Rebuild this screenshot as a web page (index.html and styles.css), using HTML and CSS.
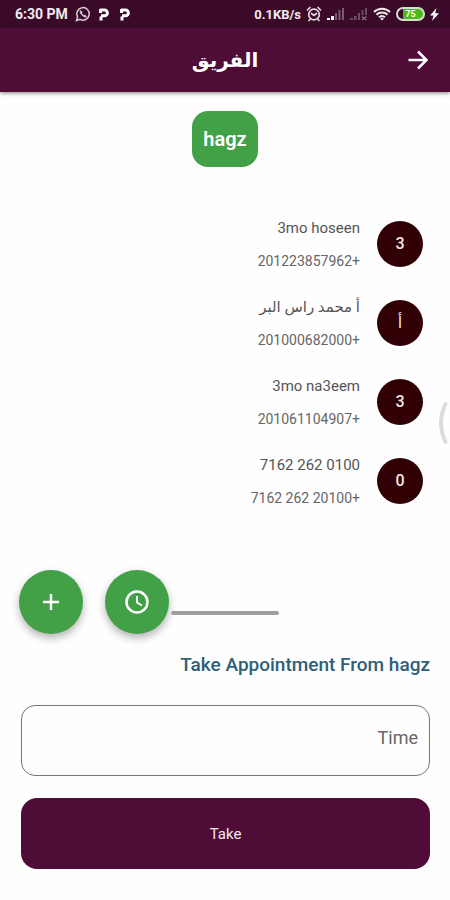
FILE: index.html
```
<!DOCTYPE html>
<html lang="ar" dir="rtl">
<head>
    <meta charset="UTF-8">
    <meta name="viewport" content="width=device-width, initial-scale=1">
    <title>الفريق</title>
    <link rel="stylesheet" href="styles.css">
</head>
<body>
<div class="status-bar" dir="ltr">
    <div class="status-group left">
        <span class="clock">6:30 PM</span>
        <svg width="16" height="16" viewBox="0 0 16 16" fill="none" stroke="#d9ccd4">
            <path d="M1.5 14.5l1-3.6a6.3 6.3 0 1 1 2.5 2.5z" stroke-width="1.5"/>
            <path d="M5.4 4.6c-.8 1 .1 3 1.7 4.6s3.5 2.3 4.4 1.4l-1.7-1.5-1.1.6c-1-.5-1.7-1.3-2.1-2.2l.6-1z" fill="#d9ccd4"/>
        </svg>
        <svg class="app-icon" width="12" height="14" viewBox="0 0 12 14" fill="none" stroke="#fff" stroke-width="3" stroke-linejoin="round">
            <path d="M3 13.5V9.500M2.500 6V3h4a2.800 2.800 0 0 1 0 5.800H3"/>
        </svg>
        <svg class="app-icon" width="12" height="14" viewBox="0 0 12 14" fill="none" stroke="#fff" stroke-width="3" stroke-linejoin="round">
            <path d="M3 13.5V9.500M2.500 6V3h4a2.800 2.800 0 0 1 0 5.800H3"/>
        </svg>
    </div>
    <div class="status-group right">
        <span class="speed">0.1KB/s</span>
        <svg width="16" height="16" viewBox="0 0 16 16" fill="none" stroke="#e3d9df" stroke-width="1.7" stroke-linecap="round">
            <circle cx="8" cy="8.5" r="5.3"/>
            <path d="M1.5 4L4 1.5M14.5 4L12 1.5M5.5 7.5L8 9.500l2.500-2M4 13.500l-1 1M12 13.500l1 1"/>
        </svg>
        <svg width="18" height="14" viewBox="0 0 18 14">
            <path d="M0 13v-2h3v2zM4 13V9h3v4z" fill="#fff"/>
            <path d="M8 13V6h2v7zM11.500 13V3h2v10zM15 13V1h2v12z" fill="#7d5a70"/>
        </svg>
        <svg width="18" height="14" viewBox="0 0 18 14" fill="#6e4a60">
            <path d="M0 13v-2h3v2zM4 13V9h2.500v4zM8 13V6h2v7zM11.500 8V3h2v5zM15 8V1h2v7z"/>
            <path d="M12 9.500l4.500 3.500M16.500 9.500L12 13" stroke="#8b6c80" stroke-width="1.3"/>
        </svg>
        <svg width="18" height="14" viewBox="0 0 18 14" fill="none" stroke="#f1ebef" stroke-width="2">
            <path d="M1 5a11.500 11.500 0 0 1 16 0M3.500 7.800a8 8 0 0 1 11 0M6 10.300a4.500 4.500 0 0 1 6 0"/>
            <path d="M9 13.500l-1.800-1.800a2.500 2.500 0 0 1 3.600 0z" fill="#f1ebef" stroke="none"/>
        </svg>
        <span class="battery">75</span>
        <svg width="9" height="13" viewBox="0 0 9 13" fill="#fff">
            <path d="M6.500 0L0 7.500h3.500L2 13l7-7.800H5.200z"/>
        </svg>
    </div>
</div>

<header class="app-bar">
    <button class="back" aria-label="رجوع">
        <svg width="22" height="22" viewBox="0 0 22 22" fill="none" stroke="#fff" stroke-width="2.5">
            <path d="M1.500 11h17M11 2.500l8.500 8.500-8.500 8.500"/>
        </svg>
    </button>
    <h1>الفريق</h1>
</header>

<main>
    <div class="team">hagz</div>

    <ul class="contacts">
        <li>
            <span class="avatar">3</span>
            <div class="info">
                <p class="name">3mo hoseen</p>
                <p class="phone">+201223857962</p>
            </div>
        </li>
        <li>
            <span class="avatar">أ</span>
            <div class="info">
                <p class="name">أ محمد راس البر</p>
                <p class="phone">+201000682000</p>
            </div>
        </li>
        <li>
            <span class="avatar">3</span>
            <div class="info">
                <p class="name">3mo na3eem</p>
                <p class="phone">+201061104907</p>
            </div>
        </li>
        <li>
            <span class="avatar">0</span>
            <div class="info">
                <p class="name">0100 262 7162</p>
                <p class="phone">+20100 262 7162</p>
            </div>
        </li>
    </ul>

    <div class="actions" dir="ltr">
        <div class="fabs">
            <button class="fab" aria-label="إضافة">
                <svg width="18" height="18" viewBox="0 0 18 18" fill="none" stroke="#fff" stroke-width="2.5">
                    <path d="M9 1v16M1 9h16"/>
                </svg>
            </button>
            <button class="fab" aria-label="الوقت">
                <svg width="24" height="24" viewBox="0 0 24 24" fill="none" stroke="#fff" stroke-width="2.5">
                    <circle cx="12" cy="12" r="10.5"/>
                    <path d="M12 6v6.500l5 3" stroke-width="2"/>
                </svg>
            </button>
        </div>
        <span class="handle"></span>
    </div>

    <form class="appointment">
        <label for="time">Take Appointment From hagz</label>
        <input type="text" id="time" placeholder="Time">
        <button type="button" class="take">Take</button>
    </form>
</main>

<svg class="edge-mark" width="10" height="44" viewBox="0 0 10 44" fill="none" stroke="#dcdcdc" stroke-width="4" stroke-linecap="round">
    <path d="M7.500 3Q-1.500 22 7.500 41"/>
</svg>
</body>
</html>
```
FILE: styles.css
```
* {
    margin: 0;
    padding: 0;
    box-sizing: border-box;
}

body {
    background: #fefefe;
    color: #555;
    font-family: Roboto, "DejaVu Sans", sans-serif;
}

button {
    border: none;
    cursor: pointer;
    font-family: inherit;
}

.status-bar {
    display: flex;
    justify-content: space-between;
    align-items: center;
    height: 28px;
    padding: 0 11px 0 15px;
    background: #3b0a28;
    color: #f1ebef;
}

.status-group {
    display: flex;
    align-items: center;
    gap: 5px;
}

.status-group.left {
    gap: 7px;
}

.app-icon {
    margin-right: 2px;
}

.clock {
    font-size: 14px;
    font-weight: 700;
}

.speed {
    font-size: 13px;
    font-weight: 700;
}

.battery {
    width: 29px;
    height: 14px;
    border: 2px solid #d5e0cd;
    border-radius: 7px;
    background: linear-gradient(to right, #3b0a28 20%, #4db81f 20%);
    color: #fff;
    font-size: 9px;
    font-weight: 700;
    line-height: 10px;
    text-align: center;
}

.app-bar {
    display: grid;
    grid-template-columns: 1fr auto 1fr;
    align-items: center;
    height: 64px;
    padding: 0 21px;
    background: #4e0c36;
    box-shadow: 0 1px 4px rgba(0, 0, 0, 0.5);
}

.back {
    display: flex;
    justify-self: start;
    background: none;
}

h1 {
    color: #fff;
    font-family: "DejaVu Sans", sans-serif;
    font-size: 20px;
    font-weight: 700;
}

.team {
    width: 66px;
    margin: 19px auto 37px;
    border-radius: 16px;
    background: #42a047;
    color: #fff;
    font-size: 20px;
    font-weight: 600;
    line-height: 56px;
    text-align: center;
}

.contacts {
    list-style: none;
}

.contacts li {
    display: flex;
    align-items: center;
    gap: 17px;
    height: 79px;
    padding: 0 27px;
}

.avatar {
    width: 46px;
    height: 46px;
    border-radius: 50%;
    background: #300004;
    color: #f1e8e8;
    font-size: 16px;
    font-weight: 500;
    line-height: 46px;
    text-align: center;
}

.info {
    padding-top: 3px;
}

.info p {
    line-height: 33px;
}

.name {
    font-size: 15px;
}

.phone {
    color: #666;
    font-size: 14px;
}

.actions {
    display: grid;
    grid-template-columns: 1fr 108px 1fr;
    align-items: center;
    margin-top: 50px;
}

.fabs {
    display: flex;
    justify-content: flex-end;
    gap: 22px;
    padding-right: 2px;
}

.fab {
    display: flex;
    justify-content: center;
    align-items: center;
    width: 64px;
    height: 64px;
    border-radius: 50%;
    background: #42a047;
    box-shadow: 0 4px 8px rgba(0, 0, 0, 0.3);
}

.handle {
    height: 4px;
    margin-top: 22px;
    border-radius: 2px;
    background: #9e9e9e;
}

.appointment {
    display: flex;
    flex-direction: column;
    padding: 15px 20px 30px 21px;
}

.appointment label {
    color: #2d6079;
    font-size: 19px;
    font-weight: 500;
    line-height: 32px;
}

.appointment input {
    height: 71px;
    margin-top: 24px;
    padding: 0 11px 6px;
    border: 1px solid #777;
    border-radius: 14px;
    background: #fefefe;
    color: #555;
    font-family: inherit;
    font-size: 18px;
}

.appointment input::placeholder {
    color: #666;
    opacity: 1;
}

.take {
    height: 71px;
    margin-top: 22px;
    border-radius: 16px;
    background: #4e0c36;
    color: #f3e9ef;
    font-size: 15px;
}

/* edge swipe mark, stays over the list */
.edge-mark {
    position: fixed;
    top: 401px;
    right: 2px;
}
```
